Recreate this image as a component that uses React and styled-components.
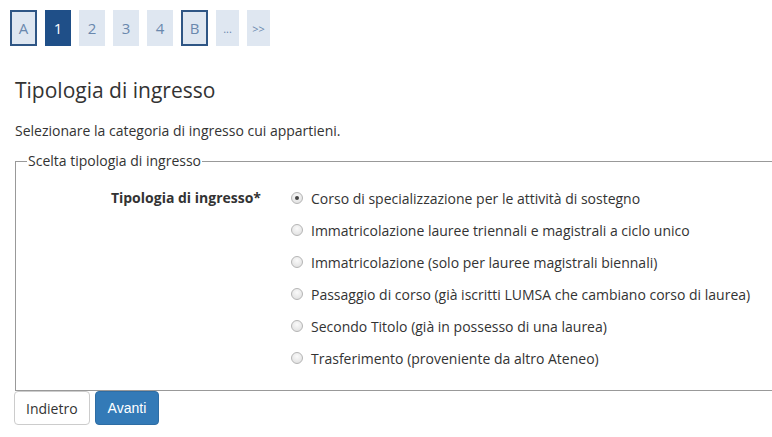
import React from "react";
import styled, { createGlobalStyle } from "styled-components";

const Global = createGlobalStyle`
  html, body { margin: 0; padding: 0; background: #fff; overflow: hidden; }
  body { font-family: "Open Sans", "Liberation Sans", sans-serif; color: #333; }
`;

const Page = styled.div`
  width: 772px;
  height: 437px;
  padding: 10px 0 0 15px;
  box-sizing: border-box;
  overflow: hidden;
`;

const Pager = styled.nav`
  display: flex;
  gap: 8px;
  margin-left: -5px;
`;

const PageBox = styled.span`
  display: flex;
  align-items: center;
  justify-content: center;
  width: ${(p) => (p.$framed ? "27px" : p.$small ? "23px" : "26px")};
  height: 36px;
  box-sizing: border-box;
  background: ${(p) => (p.$active ? "#1f4f88" : "#dfe7f1")};
  color: ${(p) => (p.$active ? "#fff" : "#6a88ad")};
  border: ${(p) => (p.$framed ? "2px solid #2f5685" : "none")};
  font-size: ${(p) => (p.$small ? "11px" : "15px")};
`;

const Title = styled.h1`
  margin: 29px 0 0;
  font-size: 21px;
  font-weight: 400;
  line-height: 30px;
  color: #333;
`;

const Intro = styled.p`
  margin: 16px 0 0;
  font-size: 14px;
  line-height: 19px;
`;

const Fieldset = styled.fieldset`
  margin: 12px 0 0;
  padding: 12px 0 16px;
  width: 790px;
  border: 1px solid #999;
  border-right: none;
  box-sizing: border-box;
`;

const Legend = styled.legend`
  font-size: 14px;
  padding: 0 1px;
  margin-left: 11px;
  line-height: 18px;
`;

const Group = styled.div`
  display: grid;
  grid-template-columns: 245px 1fr;
  column-gap: 30px;
`;

const Label = styled.div`
  text-align: right;
  font-weight: 700;
  font-size: 14px;
  line-height: 32px;
`;

const Options = styled.div`
  display: flex;
  flex-direction: column;
`;

const Option = styled.label`
  display: flex;
  align-items: center;
  gap: 8px;
  height: 32px;
  font-size: 14px;
`;

const Radio = styled.span`
  width: 10px;
  height: 10px;
  border-radius: 50%;
  border: 1px solid #b5b5b5;
  background: radial-gradient(circle at 50% 35%, #fafafa 0%, #dcdcdc 100%);
  display: flex;
  align-items: center;
  justify-content: center;
  flex: none;
  &::after {
    content: "";
    width: 4px;
    height: 4px;
    border-radius: 50%;
    background: ${(p) => (p.$checked ? "#444" : "transparent")};
  }
`;

const Actions = styled.div`
  display: flex;
  gap: 5px;
  margin: 0 0 0 -1px;
`;

const Button = styled.button`
  font-family: ${(p) => (p.$primary ? '"Liberation Sans", Arial, sans-serif' : '"Open Sans", sans-serif')};
  font-size: 14px;
  height: 34px;
  padding: 0 ${(p) => (p.$primary ? "12px" : "11px")};
  border-radius: 4px;
  border: 1px solid ${(p) => (p.$primary ? "#2e6da4" : "#ccc")};
  background: ${(p) => (p.$primary ? "#337ab7" : "#fff")};
  color: ${(p) => (p.$primary ? "#fff" : "#333")};
`;

const pages = [
  { t: "A", framed: true },
  { t: "1", active: true },
  { t: "2" },
  { t: "3" },
  { t: "4" },
  { t: "B", framed: true },
  { t: "...", small: true },
  { t: ">>", small: true },
];

const options = [
  "Corso di specializzazione per le attività di sostegno",
  "Immatricolazione lauree triennali e magistrali a ciclo unico",
  "Immatricolazione (solo per lauree magistrali biennali)",
  "Passaggio di corso (già iscritti LUMSA che cambiano corso di laurea)",
  "Secondo Titolo (già in possesso di una laurea)",
  "Trasferimento (proveniente da altro Ateneo)",
];

export default function App() {
  return (
    <Page>
      <Global />
      <Pager>
        {pages.map((p, i) => (
          <PageBox key={i} $active={p.active} $framed={p.framed} $small={p.small}>
            {p.t}
          </PageBox>
        ))}
      </Pager>
      <Title>Tipologia di ingresso</Title>
      <Intro>Selezionare la categoria di ingresso cui appartieni.</Intro>
      <Fieldset>
        <Legend>Scelta tipologia di ingresso</Legend>
        <Group>
          <Label>Tipologia di ingresso*</Label>
          <Options>
            {options.map((o, i) => (
              <Option key={i}>
                <Radio $checked={i === 0} />
                {o}
              </Option>
            ))}
          </Options>
        </Group>
      </Fieldset>
      <Actions>
        <Button>Indietro</Button>
        <Button $primary>Avanti</Button>
      </Actions>
    </Page>
  );
}
